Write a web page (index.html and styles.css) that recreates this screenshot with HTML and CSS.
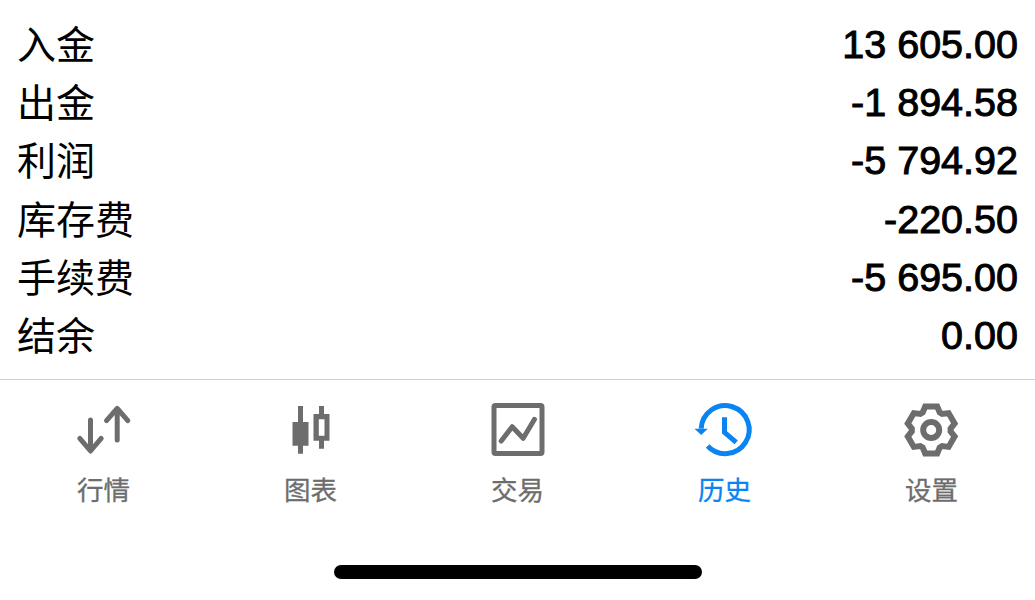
FILE: index.html
```html
<!DOCTYPE html>
<html lang="zh-CN">
<head>
  <meta charset="UTF-8" />
  <title>历史</title>
  <link rel="stylesheet" href="styles.css">
</head>
<body>
  <ul class="summary">
    <li><span class="name">入金</span><span class="amount">13 605.00</span></li>
    <li><span class="name">出金</span><span class="amount">-1 894.58</span></li>
    <li><span class="name">利润</span><span class="amount">-5 794.92</span></li>
    <li><span class="name">库存费</span><span class="amount">-220.50</span></li>
    <li><span class="name">手续费</span><span class="amount">-5 695.00</span></li>
    <li><span class="name">结余</span><span class="amount">0.00</span></li>
  </ul>

  <nav class="tabs">
    <a class="tab">
      <svg viewBox="0 0 56 56" class="icon stroked">
        <path d="M14.5 18V48M3.8 36.3L14.5 49L25.2 36.3" />
        <path d="M41.2 8V38M30.5 18.7L41.2 6.3L51.8 18.7" />
      </svg>
      <span>行情</span>
    </a>
    <a class="tab">
      <svg viewBox="0 0 56 56" class="icon filled">
        <path d="M15 4H20V20H25.5V43.7H20V51.7H15V43.7H9.5V20H15Z" />
        <path fill-rule="evenodd" d="M36 4H41V12H46.5V38.7H41V46.7H36V38.7H30.5V12H36ZM35.8 17.3V33.7H41.5V17.3Z" />
      </svg>
      <span>图表</span>
    </a>
    <a class="tab">
      <svg viewBox="0 0 56 56" class="icon stroked">
        <rect x="4" y="3.5" width="48" height="48" rx="1.5" />
        <path d="M11.2 39L22.2 24.7L33.2 36.3L44.5 17.3" />
      </svg>
      <span>交易</span>
    </a>
    <a class="tab active">
      <svg viewBox="0 0 56 56" class="icon stroked">
        <path class="no-round" d="M4.2 26.7A24 24 0 1 1 10.6 44" />
        <path class="no-round" d="M27.5 15.3V30.3L39.2 40.3" />
        <path class="head" d="M-2.5 26.7H10.8L4.2 33Z" />
      </svg>
      <span>历史</span>
    </a>
    <a class="tab">
      <svg viewBox="0 0 56 56" class="icon stroked">
        <g transform="translate(27.2 28)" class="gear">
          <path class="no-round" d="M-8.5 -17.5L-6 -23.5H6L8.5 -17.5L10.9 -16.1L17.4 -16.9L23.4 -6.5L19.4 -1.4V1.4L23.4 6.5L17.4 16.9L10.9 16.1L8.5 17.5L6 23.5H-6L-8.5 17.5L-10.9 16.1L-17.4 16.9L-23.4 6.5L-19.4 1.4V-1.4L-23.4 -6.5L-17.4 -16.9L-10.9 -16.1Z" />
          <circle r="8" />
        </g>
      </svg>
      <span>设置</span>
    </a>
  </nav>

  <div class="home-bar"></div>
</body>
</html>
```

FILE: styles.css
```css
* {
  box-sizing: border-box;
}
html, body {
  height: 600px;
  overflow: hidden;
}
body {
  margin: 0;
  background-color: #fff;
  color: #000;
  font-family: "Liberation Sans", "Noto Sans CJK SC", sans-serif;
}

/* Summary rows */
.summary {
  list-style: none;
  margin: 0;
  padding: 15px 17px 14px 17px;
  border-bottom: 1px solid #cfcfcf;
}
.summary li {
  display: flex;
  justify-content: space-between;
  align-items: center;
  height: 58.33px;
  font-size: 39px;
}
.name {
  padding-bottom: 5px;
}
.amount {
  font-size: 39.5px;
  -webkit-text-stroke: 1px #000;
}

/* Tab bar */
.tabs {
  display: grid;
  grid-template-columns: repeat(5, 207px);
  padding-top: 22px;
}
.tab {
  display: flex;
  flex-direction: column;
  align-items: center;
  color: #6d6d6d;
  font-size: 26.5px;
  line-height: 32px;
  -webkit-text-stroke: 0.3px currentColor;
}
.tab.active {
  color: #0a84f0;
}
.icon {
  width: 56px;
  height: 56px;
  margin-bottom: 17px;
  overflow: visible;
}
.icon.filled {
  fill: currentColor;
}
.icon.stroked {
  fill: none;
  stroke: currentColor;
  stroke-width: 5;
  stroke-linecap: round;
  stroke-linejoin: round;
}
.icon .no-round {
  stroke-linecap: butt;
  stroke-linejoin: miter;
}
.icon .head {
  fill: currentColor;
  stroke: none;
}
.icon .gear {
  stroke-width: 6;
}

.home-bar {
  width: 368px;
  height: 14px;
  margin: 58px auto 0 auto;
  border-radius: 7px;
  background-color: #000;
}
```
